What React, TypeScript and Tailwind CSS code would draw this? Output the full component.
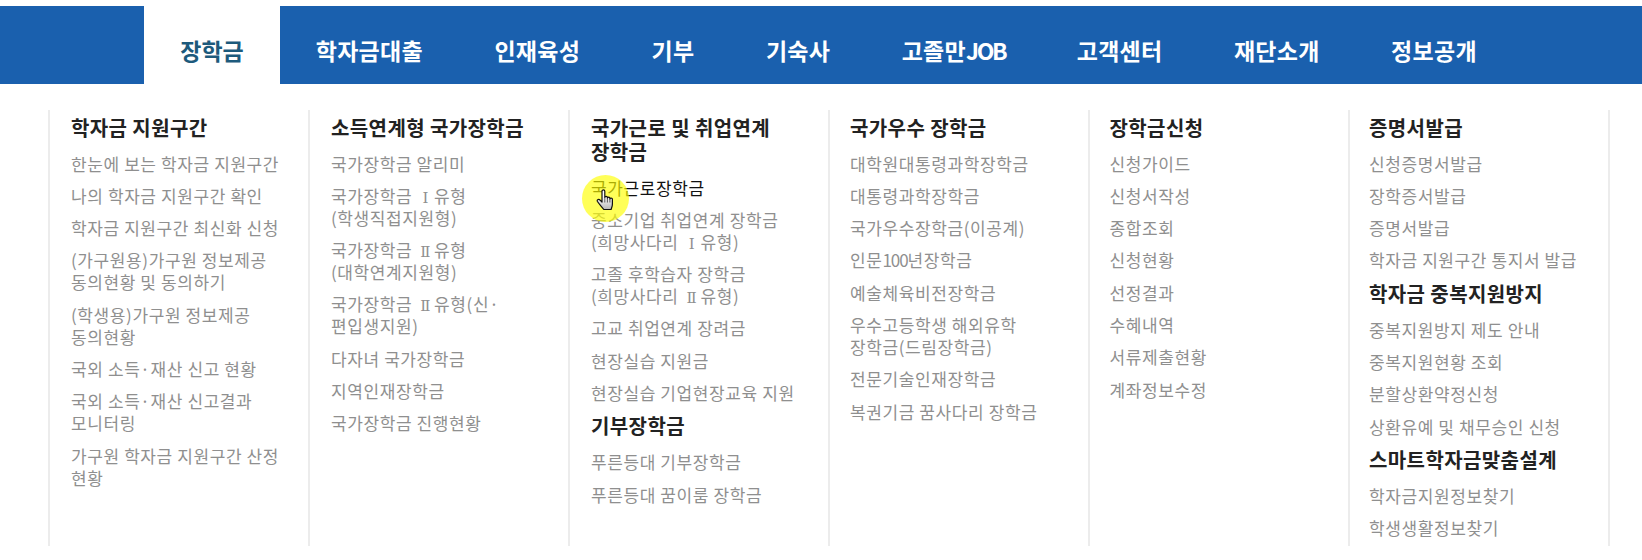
import React from "react";
const nav = ["학자금대출","인재육성","기부","기숙사","고졸만JOB","고객센터","재단소개","정보공개"];
type Sec = { h: string; items: string[] };
const cols: Sec[][] = [
 [{h:"학자금 지원구간",items:["한눈에 보는 학자금 지원구간","나의 학자금 지원구간 확인","학자금 지원구간 최신화 신청","(가구원용)가구원 정보제공\n동의현황 및 동의하기","(학생용)가구원 정보제공\n동의현황","국외 소득·재산 신고 현황","국외 소득·재산 신고결과\n모니터링","가구원 학자금 지원구간 산정\n현황"]}],
 [{h:"소득연계형 국가장학금",items:["국가장학금 알리미","국가장학금 Ⅰ유형\n(학생직접지원형)","국가장학금 Ⅱ유형\n(대학연계지원형)","국가장학금 Ⅱ유형(신·\n편입생지원)","다자녀 국가장학금","지역인재장학금","국가장학금 진행현황"]}],
 [{h:"국가근로 및 취업연계\n장학금",items:["국가근로장학금","중소기업 취업연계 장학금\n(희망사다리 Ⅰ유형)","고졸 후학습자 장학금\n(희망사다리 Ⅱ유형)","고교 취업연계 장려금","현장실습 지원금","현장실습 기업현장교육 지원"]},{h:"기부장학금",items:["푸른등대 기부장학금","푸른등대 꿈이룸 장학금"]}],
 [{h:"국가우수 장학금",items:["대학원대통령과학장학금","대통령과학장학금","국가우수장학금(이공계)","인문100년장학금","예술체육비전장학금","우수고등학생 해외유학\n장학금(드림장학금)","전문기술인재장학금","복권기금 꿈사다리 장학금"]}],
 [{h:"장학금신청",items:["신청가이드","신청서작성","종합조회","신청현황","선정결과","수혜내역","서류제출현황","계좌정보수정"]}],
 [{h:"증명서발급",items:["신청증명서발급","장학증서발급","증명서발급","학자금 지원구간 통지서 발급"]},{h:"학자금 중복지원방지",items:["중복지원방지 제도 안내","중복지원현황 조회","분할상환약정신청","상환유예 및 채무승인 신청"]},{h:"스마트학자금맞춤설계",items:["학자금지원정보찾기","학생생활정보찾기"]}],
];
const pads = ["pl-[21px]","pl-[21px]","pl-[21px]","pl-[20px]","pl-[19.5px]","pl-[19px]"];
function Rich({t}:{t:string}){
 const parts = t.split(/(Ⅰ|Ⅱ|100)/);
 return <>{parts.map((p,i)=>{
  if(p==="Ⅰ"||p==="Ⅱ") return <span key={i} className="inline-block w-[17.5px] text-center font-['DejaVu_Serif',serif] text-[15px] font-extralight leading-none tracking-normal">{p}</span>;
  if(p==="100") return <span key={i} className="tracking-[-1.100px]">{p}</span>;
  return <React.Fragment key={i}>{p}</React.Fragment>;
 })}</>;
}
export default function App(){
 return (
  <div className="relative h-[560px] w-[1642px] overflow-hidden bg-white pt-[6px] font-['Malgun_Gothic','Noto_Sans_CJK_KR',sans-serif]">
   <nav className="flex h-[78px] items-stretch bg-[#1a60ae] pl-[144px]">
    <a className="flex w-[136px] items-center justify-center bg-white pt-[10px] text-[23px] font-bold text-[#1d5a7c]">장학금</a>
    {nav.map(n=><a key={n} className="flex items-center px-[35.7px] pt-[10px] text-[23px] font-bold tracking-[0.3px] text-white">
      {n==="고졸만JOB"?<>고졸만<span className="tracking-[-2.400px]">JOB</span></>:n}
    </a>)}
   </nav>
   <div className="ml-[48px] mt-[26px] grid w-[1562px] grid-cols-6 grid-rows-[436px] border-r-2 border-[#ececec]">
    {cols.map((c,i)=>(
     <div key={i} className={"border-l-2 border-[#ececec] pt-[5.5px] "+pads[i]}>
      {c.map(s=>(
       <section key={s.h} className="mb-[3px]">
        <h3 className="whitespace-pre-line text-[20px] font-bold leading-[24px] tracking-[0.4px] text-[#222222]">{s.h}</h3>
        <ul className="mt-[13px]">
         {s.items.map(t=>(
          <li key={t} className={"mb-[10.3px] whitespace-pre-line text-[17px] leading-[22px] tracking-[0.6px] "+(t==="국가근로장학금"?"text-[#111111]":"text-[#8f8f8f]")}><Rich t={t}/></li>
         ))}
        </ul>
       </section>
      ))}
     </div>
    ))}
   </div>
   <div className="absolute left-[582px] top-[175px] h-[47px] w-[47px] rounded-full bg-[#ffff00]/65"/>
   <svg className="absolute left-[596px] top-[189px]" width="19" height="22" viewBox="0 0 19 22">
    <defs><linearGradient id="g" x1="0" y1="0" x2="0" y2="1"><stop offset="0.3" stopColor="#fff"/><stop offset="1" stopColor="#b8b8b8"/></linearGradient></defs>
    <path d="M6 2.200c0-1.700 2.800-1.700 2.800 0V8.500c0-1.500 2.600-1.500 2.600 0v.7c0-1.400 2.500-1.400 2.500 0v.8c0-1.300 2.500-1.300 2.500 0v5c0 2.500-.8 3.500-1.300 5.500H7.800C6.500 18.500 2.500 14.500 1.300 12.300c-.7-1.800 1.600-2.600 2.700-1.300L6 13Z" fill="url(#g)" stroke="#111" strokeWidth="1.200" strokeLinejoin="round"/>
    <path d="M8.800 9v4.500M11.400 9.500v4M13.900 10v3.500" stroke="#333" strokeWidth="0.800" fill="none"/>
   </svg>
  </div>
 );
}
